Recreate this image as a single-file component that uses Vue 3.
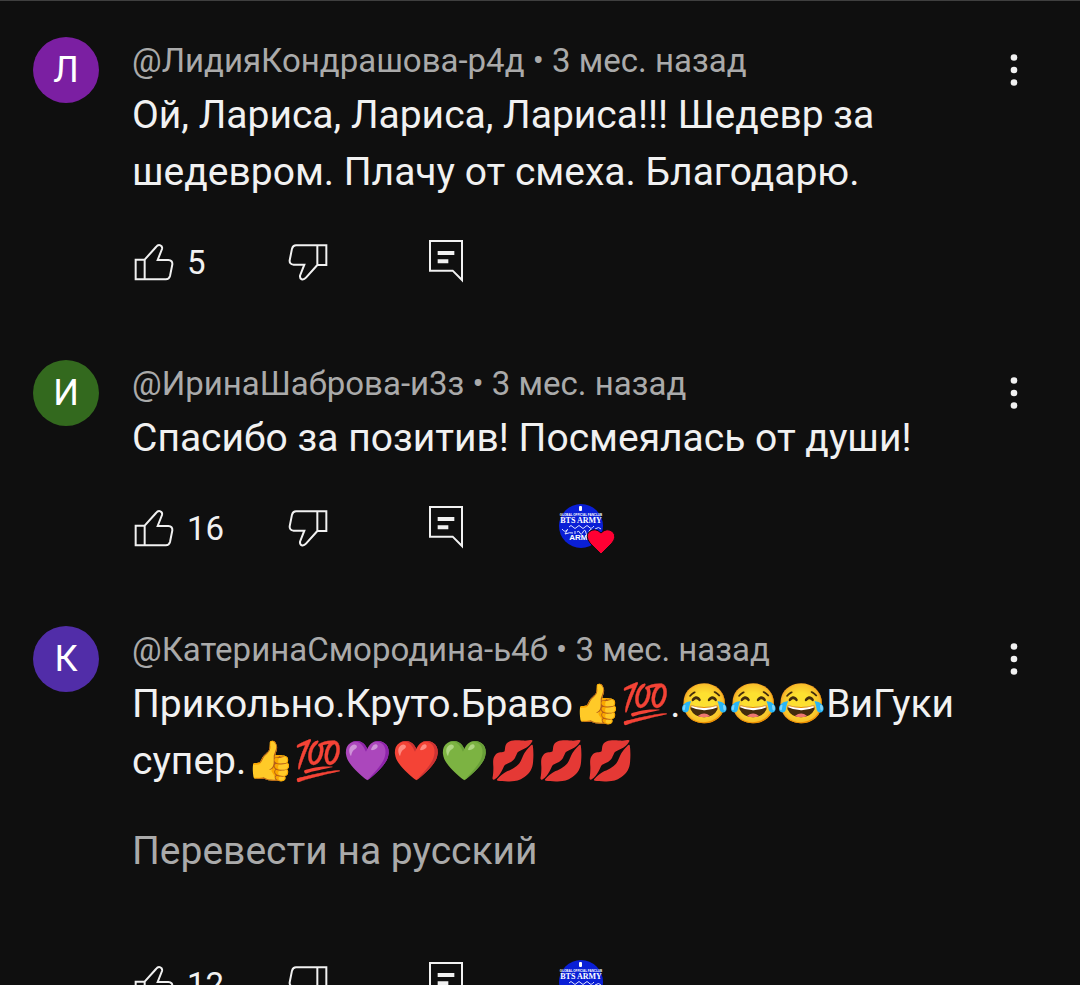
<script setup>
const comments = [
  {
    initial: 'Л',
    tone: 'purple',
    author: '@ЛидияКондрашова-р4д',
    time: '3 мес. назад',
    text: 'Ой, Лариса, Лариса, Лариса!!! Шедевр за шедевром. Плачу от смеха. Благодарю.',
    likes: 5,
    hearted: false,
    translate: false,
  },
  {
    initial: 'И',
    tone: 'green',
    author: '@ИринаШаброва-и3з',
    time: '3 мес. назад',
    text: 'Спасибо за позитив! Посмеялась от души!',
    likes: 16,
    hearted: true,
    translate: false,
  },
  {
    initial: 'К',
    tone: 'violet',
    author: '@КатеринаСмородина-ь4б',
    time: '3 мес. назад',
    text: 'Прикольно.Круто.Браво👍💯.😂😂😂ВиГуки супер.👍💯💜❤️💚💋💋💋',
    likes: 12,
    hearted: true,
    translate: true,
  },
]
</script>

<template>
  <main class="comments">
    <article v-for="c in comments" :key="c.author" class="comment">
      <div class="avatar" :class="c.tone">{{ c.initial }}</div>
      <div class="content">
        <header class="meta">{{ c.author }} • {{ c.time }}</header>
        <p class="text">{{ c.text }}</p>
        <button v-if="c.translate" type="button" class="translate">Перевести на русский</button>
        <div class="actions">
          <button type="button" class="action like" aria-label="Нравится">
            <svg class="icon" viewBox="36 47 126 126" aria-hidden="true">
              <path d="M47 103H74V162H47ZM74 103L108 65Q114 57 121 60Q128 63 126 71L113 104H145Q158 105 157 117L150 152Q147 162 138 162H74" />
            </svg>
            <span>{{ c.likes }}</span>
          </button>
          <button type="button" class="action dislike" aria-label="Не нравится">
            <svg class="icon" viewBox="498 47 126 126" aria-hidden="true">
              <path d="M619 119H592V60H619ZM592 119L558 157Q552 164 545 162Q539 159 540 151L553 118H521Q508 117 509 105L516 70Q519 60 528 60H592" />
            </svg>
          </button>
          <button type="button" class="action reply" aria-label="Ответить">
            <svg class="icon tall" viewBox="912 44 126 132" aria-hidden="true">
              <path d="M930 47H1026V164L998 136H930Z" />
              <path class="solid" d="M953 77H1003V89H953ZM953 102H985V114H953Z" />
            </svg>
          </button>
          <svg v-if="c.hearted" class="badge" viewBox="0 0 60 54" role="img" aria-label="Отмечено автором">
            <circle cx="25" cy="25" r="22" fill="#0a1fd6" />
            <rect x="23" y="5" width="3" height="5" rx="1" fill="#fff" />
            <text x="25" y="15" class="tiny">GLOBAL OFFICIAL FANCLUB</text>
            <text x="25" y="22" class="serif">BTS ARMY</text>
            <path class="script" d="M13 26q2-3 4 0t4 0 4 0 4 0 4 0 5-1M6 28q3 4 5 1t-2 4q5-2 8-1m2-2v3m2-2q2-2 3 1t3-1 3 1 3-1 3 1M39 28q4-3 6 0" />
            <text x="25" y="39" class="sans">ARMY</text>
            <path d="M45 53L34 42Q29 35 33 31Q39 26 45 32Q51 26 57 31Q61 36 56 42Z" fill="#ff0033" stroke="#0f0f0f" stroke-width="1" />
          </svg>
        </div>
      </div>
      <button type="button" class="menu" aria-label="Ещё">
        <svg viewBox="0 0 66 66" aria-hidden="true">
          <circle cx="33" cy="20.500" r="3.300" />
          <circle cx="33" cy="33" r="3.300" />
          <circle cx="33" cy="45.500" r="3.300" />
        </svg>
      </button>
    </article>
  </main>
</template>

<style>
body {
  margin: 0;
  background: #0f0f0f;
}
</style>

<style scoped>
.comments {
  box-sizing: border-box;
  height: 100vh;
  overflow-y: auto;
  scrollbar-width: none;
  background: #0f0f0f;
  box-shadow: inset 0 1px #3f3f3f;
  color: #f1f1f1;
  font-family: Roboto, "Noto Color Emoji", sans-serif;
}
.comment {
  display: grid;
  grid-template-columns: 99px minmax(0, 1fr) 66px;
  padding: 37px 33px 28px;
}
.avatar {
  display: flex;
  align-items: center;
  justify-content: center;
  width: 66px;
  height: 66px;
  border-radius: 50%;
  color: #fff;
  font-size: 36px;
}
.purple { background: #7b1fa2; }
.green { background: #33691e; }
.violet { background: #512da8; }
.meta {
  margin-bottom: 3px;
  color: #aaa;
  font-size: 33px;
  line-height: 47px;
  white-space: nowrap;
}
.text {
  margin: 0;
  font-size: 39px;
  line-height: 57px;
}
button {
  display: flex;
  align-items: center;
  padding: 0;
  border: 0;
  background: none;
  color: inherit;
  font-family: inherit;
  cursor: pointer;
}
.translate {
  margin: 33px 0 71px;
  color: #aaa;
  font-size: 39px;
  line-height: 57px;
}
.actions {
  display: flex;
  align-items: center;
  height: 66px;
  margin-top: 28px;
}
.action {
  height: 66px;
  gap: 13px;
  font-size: 33px;
}
.like { width: 154px; }
.dislike { width: 138px; }
.reply { width: 132px; }
.icon {
  width: 42px;
  height: 42px;
  fill: none;
  stroke: #f1f1f1;
  stroke-width: 6;
}
.icon.tall { height: 44px; }
.icon .solid {
  fill: #f1f1f1;
  stroke: none;
}
.badge {
  width: 60px;
  height: 54px;
}
.badge text {
  fill: #fff;
  text-anchor: middle;
}
.tiny { font: bold 3px "Liberation Sans", sans-serif; }
.serif { font: bold 8px "Liberation Serif", serif; }
.sans { font: bold 8px "Liberation Sans", sans-serif; }
.script {
  fill: none;
  stroke: #dfe4ff;
  stroke-width: 1;
}
.menu {
  justify-content: center;
  width: 66px;
  height: 66px;
}
.menu svg {
  width: 66px;
  height: 66px;
  fill: #f1f1f1;
}
</style>
